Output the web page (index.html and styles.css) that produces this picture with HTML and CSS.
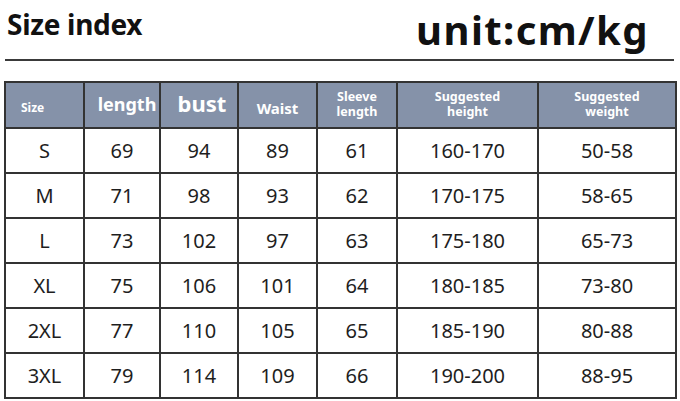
FILE: index.html
```html
<!DOCTYPE html>
<html lang="en">
<head>
<meta charset="utf-8">
<title>Size index</title>
<link rel="stylesheet" href="styles.css">
</head>
<body>
<div class="page">
  <header class="top">
    <h1 class="title">Size index</h1>
    <div class="unit">unit:cm/kg</div>
  </header>
  <table class="sizes">
    <colgroup>
      <col class="c1"><col class="c2"><col class="c3"><col class="c4"><col class="c5"><col class="c6"><col class="c7">
    </colgroup>
    <thead>
      <tr>
        <th class="h-size">Size</th>
        <th class="h-length">length</th>
        <th class="h-bust">bust</th>
        <th class="h-waist">Waist</th>
        <th class="h-small"><span class="ln">Sleeve</span><span class="ln">length</span></th>
        <th class="h-small"><span class="ln">Suggested</span><span class="ln">height</span></th>
        <th class="h-small"><span class="ln">Suggested</span><span class="ln">weight</span></th>
      </tr>
    </thead>
    <tbody>
      <tr><td>S</td><td>69</td><td>94</td><td>89</td><td>61</td><td>160-170</td><td>50-58</td></tr>
      <tr><td>M</td><td>71</td><td>98</td><td>93</td><td>62</td><td>170-175</td><td>58-65</td></tr>
      <tr><td>L</td><td>73</td><td>102</td><td>97</td><td>63</td><td>175-180</td><td>65-73</td></tr>
      <tr><td>XL</td><td>75</td><td>106</td><td>101</td><td>64</td><td>180-185</td><td>73-80</td></tr>
      <tr><td>2XL</td><td>77</td><td>110</td><td>105</td><td>65</td><td>185-190</td><td>80-88</td></tr>
      <tr><td>3XL</td><td>79</td><td>114</td><td>109</td><td>66</td><td>190-200</td><td>88-95</td></tr>
    </tbody>
  </table>
</div>
</body>
</html>
```
FILE: styles.css
```css
html, body {
  margin: 0;
  padding: 0;
  background: #ffffff;
}
.page {
  width: 680px;
  height: 401px;
  box-sizing: border-box;
  padding: 0 5px 0 4px;
  font-family: "Noto Sans", "Open Sans", sans-serif;
  color: #1e1e1e;
}
.top {
  display: flex;
  justify-content: space-between;
  align-items: flex-start;
  height: 61px;
  border-bottom: 2px solid #3a3a3a;
  margin-left: 1px;
  margin-right: 1px;
  box-sizing: border-box;
}
.title {
  margin: 4px 0 0 2px;
  font-size: 28px;
  font-weight: 700;
  line-height: 40px;
  letter-spacing: -0.3px;
  color: #111;
}
.unit {
  margin: 4px 25px 0 0;
  font-size: 40px;
  font-weight: 700;
  line-height: 52px;
  letter-spacing: 1.4px;
  color: #111;
}
.sizes {
  margin-top: 20px;
  border-collapse: collapse;
  table-layout: fixed;
  width: 671px;
}
.c1 { width: 79px; }
.c2 { width: 76px; }
.c3 { width: 78px; }
.c4 { width: 79px; }
.c5 { width: 80px; }
.c6 { width: 141px; }
.c7 { width: 138px; }
.sizes th,
.sizes td {
  border: 2px solid #333;
  text-align: center;
  padding: 0;
}
.sizes th {
  background: #8592a9;
  color: #ffffff;
  font-weight: 700;
  height: 38px;
  line-height: 1.1;
}
.sizes .h-size {
  font-size: 12px;
  text-align: left;
  padding-left: 15px;
  padding-top: 6px;
}
.sizes .h-length {
  font-size: 18px;
  padding-left: 10px;
}
.sizes .h-bust {
  font-size: 22px;
  padding-left: 6px;
  padding-bottom: 4px;
}
.sizes .h-waist {
  font-size: 15px;
  padding-top: 6px;
}
.sizes .h-small {
  font-size: 12.5px;
  line-height: 15px;
  padding-bottom: 2px;
}
.ln {
  display: block;
}
.sizes td {
  height: 43px;
  font-size: 20px;
  font-weight: 400;
  color: #1e1e1e;
  background: #fff;
}
```
